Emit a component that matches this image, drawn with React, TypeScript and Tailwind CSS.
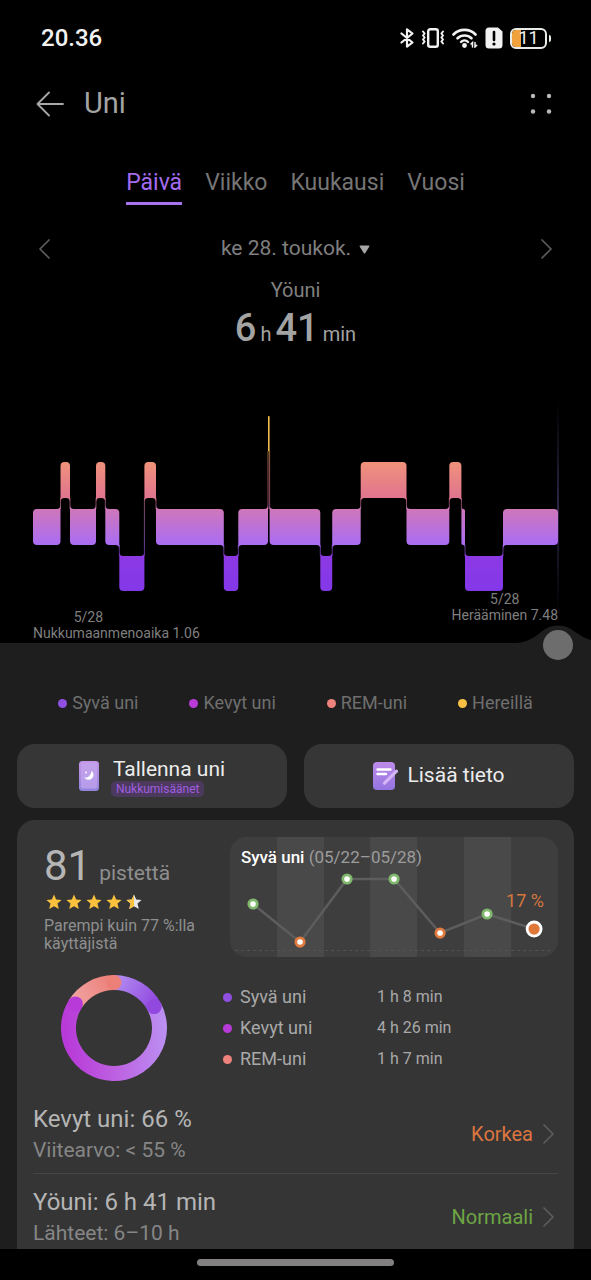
import React, { useState } from 'react';

type Level = 'awake' | 'rem' | 'light' | 'deep';

interface Segment {
  level: Level;
  from: number;
  to: number;
}

const TABS = ['Päivä', 'Viikko', 'Kuukausi', 'Vuosi'];

const LEGEND = [
  { name: 'Syvä uni', dot: 'bg-[#8f4fe0]' },
  { name: 'Kevyt uni', dot: 'bg-[#b83bd8]' },
  { name: 'REM-uni', dot: 'bg-[#ee827c]' },
  { name: 'Hereillä', dot: 'bg-[#f7c244]' },
];

const DURATIONS = ['1 h 8 min', '4 h 26 min', '1 h 7 min'];

const METRICS = [
  { title: 'Kevyt uni: 66 %', reference: 'Viitearvo: < 55 %', status: 'Korkea', color: 'text-[#dd7540]' },
  { title: 'Yöuni: 6 h 41 min', reference: 'Lähteet: 6–10 h', status: 'Normaali', color: 'text-[#6da544]' },
];

// Top and bottom edge of each sleep stage in the chart
const BANDS: Record<Level, [number, number]> = {
  awake: [25, 60],
  rem: [71, 107],
  light: [118, 154],
  deep: [165, 200],
};

const SEGMENTS: Segment[] = [
  { level: 'light', from: 33, to: 60.5 },
  { level: 'rem', from: 60.5, to: 70 },
  { level: 'light', from: 70, to: 96 },
  { level: 'rem', from: 96, to: 105.3 },
  { level: 'light', from: 105.3, to: 119.3 },
  { level: 'deep', from: 119.3, to: 144.4 },
  { level: 'rem', from: 144.4, to: 156 },
  { level: 'light', from: 156, to: 223.8 },
  { level: 'deep', from: 223.8, to: 238.3 },
  { level: 'light', from: 238.3, to: 268 },
  { level: 'awake', from: 268, to: 269.6 },
  { level: 'light', from: 269.6, to: 320.3 },
  { level: 'deep', from: 320.3, to: 332.2 },
  { level: 'light', from: 332.2, to: 360.7 },
  { level: 'rem', from: 360.7, to: 406.5 },
  { level: 'light', from: 406.5, to: 449.3 },
  { level: 'rem', from: 449.3, to: 461.4 },
  { level: 'light', from: 461.4, to: 465 },
  { level: 'deep', from: 465, to: 503 },
  { level: 'light', from: 503, to: 558 },
];

const TREND = [
  { x: 23, y: 67, ok: true },
  { x: 70, y: 105, ok: false },
  { x: 117, y: 42, ok: true },
  { x: 164, y: 42, ok: true },
  { x: 210, y: 96, ok: false },
  { x: 257, y: 77, ok: true },
];

// A corner flares towards a neighbour on that side and is rounded otherwise
function segmentPath(index: number) {
  const { level, from, to } = SEGMENTS[index];
  const [top, bottom] = BANDS[level];
  const r = Math.min(4, (to - from) / 2);
  const prev = SEGMENTS[index - 1];
  const next = SEGMENTS[index + 1];
  const above = (s?: Segment) => (s && BANDS[s.level][0] < top ? -r : r);
  const below = (s?: Segment) => (s && BANDS[s.level][0] > top ? r : -r);
  return [
    `M${from} ${top + above(prev)}`,
    `Q${from} ${top} ${from + r} ${top}`,
    `H${to - r}`,
    `Q${to} ${top} ${to} ${top + above(next)}`,
    `V${bottom + below(next)}`,
    `Q${to} ${bottom} ${to - r} ${bottom}`,
    `H${from + r}`,
    `Q${from} ${bottom} ${from} ${bottom + below(prev)}`,
    'Z',
  ].join(' ');
}

function arc(start: number, end: number) {
  const point = (deg: number) => {
    const a = (deg * Math.PI) / 180;
    return `${53 + 45.5 * Math.sin(a)} ${53 - 45.5 * Math.cos(a)}`;
  };
  return `M${point(start)} A45.5 45.5 0 ${end - start > 180 ? 1 : 0} 1 ${point(end)}`;
}

function StatusBar() {
  return (
    <div className="flex h-[76px] items-center justify-between pl-[41px] pr-10 text-[#f2f2f2]">
      <span className="text-2xl font-medium">20.36</span>
      <div className="flex items-center gap-[7px]">
        <svg className="h-5 w-[14px]" viewBox="0 0 14 20" fill="none" stroke="currentColor" strokeWidth="2.2" strokeLinejoin="round" strokeLinecap="round">
          <path d="M1.5 5.5l11 9L7 18.7V1.3l5.500 4.200-11 9" />
        </svg>
        <svg className="h-5 w-6" viewBox="0 0 24 20" fill="none" stroke="currentColor" strokeLinecap="round" strokeLinejoin="round">
          <rect x="7.200" y="1.200" width="9.600" height="17.600" rx="2" strokeWidth="2.400" />
          <path d="M2 3.500l1.600 2-1.600 2 1.600 2-1.600 2 1.600 2-1.600 2M22 3.500l-1.600 2 1.600 2-1.600 2 1.600 2-1.600 2 1.600 2" strokeWidth="2" />
        </svg>
        <svg className="h-5 w-[26px]" viewBox="0 0 26 20" fill="none" stroke="currentColor" strokeLinecap="round">
          <path d="M1.500 6.500a15.500 15.500 0 0 1 22 0" strokeWidth="2.600" />
          <path d="M5.500 10.300a10 10 0 0 1 14 0" strokeWidth="2.600" />
          <path d="M9 14a5 5 0 0 1 7 0" strokeWidth="2.400" />
          <circle cx="12.500" cy="17.500" r="2.400" fill="currentColor" stroke="none" />
          <path d="M20.500 19v-4.500l-1.500 1.500M23 14.500V19l1.700-1.700" strokeWidth="1.500" />
        </svg>
        <svg className="h-[22px] w-[18px]" viewBox="0 0 18 22">
          <path d="M4 0.500h9L17.500 4.500v13.500a3.500 3.500 0 0 1-3.500 3.500H4a3.500 3.500 0 0 1-3.500-3.500V4A3.500 3.500 0 0 1 4 0.500z" fill="currentColor" />
          <path d="M9 5v8" stroke="#000" strokeWidth="2.600" strokeLinecap="round" />
          <circle cx="9" cy="17" r="1.600" fill="#000" />
        </svg>
        <div className="flex items-center gap-0.5">
          <div className="relative flex h-[21px] w-[37px] items-center justify-center overflow-hidden rounded-md border-2 border-[#e8ece6]">
            <div className="absolute inset-y-0 left-0 w-[9px] bg-[#f2a23c]" />
            <span className="relative text-lg leading-4">11</span>
          </div>
          <div className="h-[7px] w-0.5 rounded-r bg-[#e8ece6]" />
        </div>
      </div>
    </div>
  );
}

function Chevron({ left = false }: { left?: boolean }) {
  return (
    <svg className="h-5 w-[11px]" viewBox="0 0 11 20" fill="none" stroke="#5c5c5c" strokeWidth="1.700" strokeLinecap="round" strokeLinejoin="round">
      <path d={left ? 'M10 1L1 10l9 9' : 'M1 1l9 9-9 9'} />
    </svg>
  );
}

function SleepChart() {
  return (
    <svg className="mt-[33px] block w-full overflow-visible" viewBox="0 0 591 200">
      <defs>
        <linearGradient id="stages" gradientUnits="userSpaceOnUse" x1="0" y1="25" x2="0" y2="200">
          <stop offset="0" stopColor="#f5c04d" />
          <stop offset="0.2" stopColor="#f0b650" />
          <stop offset="0.26" stopColor="#f0927a" />
          <stop offset="0.47" stopColor="#e0748f" />
          <stop offset="0.53" stopColor="#cf77b9" />
          <stop offset="0.74" stopColor="#a96cf5" />
          <stop offset="0.8" stopColor="#8d39e4" />
          <stop offset="1" stopColor="#8338e8" />
        </linearGradient>
        <linearGradient id="cursor" x1="0" y1="0" x2="0" y2="1">
          <stop offset="0" stopColor="#4a3f74" stopOpacity="0" />
          <stop offset="0.5" stopColor="#4a3f74" stopOpacity="0.6" />
          <stop offset="1" stopColor="#4a3f74" stopOpacity="0" />
        </linearGradient>
      </defs>
      <rect x="557" y="10" width="2" height="210" fill="url(#cursor)" />
      {SEGMENTS.slice(1).map((s, i) => {
        const [a, b] = [BANDS[SEGMENTS[i].level], BANDS[s.level]];
        const top = Math.min(a[1], b[1]);
        const bottom = Math.max(a[0], b[0]);
        return (
          <rect key={s.from} x={s.from - 0.5} y={top} width="1" height={bottom - top} fill="url(#stages)" opacity="0.6" />
        );
      })}
      {SEGMENTS.map((s, i) => (
        <path key={s.from} d={segmentPath(i)} fill="url(#stages)" />
      ))}
    </svg>
  );
}

function TrendChart() {
  return (
    <div className="relative overflow-hidden rounded-2xl bg-[#3e3e3e]">
      <svg className="block w-full" viewBox="0 0 328 120">
        {[47, 140, 234].map((x) => (
          <rect key={x} x={x} y="0" width="47" height="120" fill="#494949" />
        ))}
        <path d="M5 113.500H323" stroke="#535353" strokeDasharray="3 3" />
        <polyline points={[...TREND, { x: 304, y: 92 }].map((p) => `${p.x},${p.y}`).join(' ')} fill="none" stroke="#5d5d5d" strokeWidth="2.500" />
        {TREND.map((p) => (
          <circle key={p.x} cx={p.x} cy={p.y} r="4.200" fill="#fff" stroke={p.ok ? '#80b86e' : '#e07a3f'} strokeWidth="2.800" />
        ))}
        <circle cx="304" cy="92" r="7" fill="#e0783a" stroke="#fff" strokeWidth="2.800" />
      </svg>
      <h2 className="absolute left-[11px] top-2 text-[17px] leading-6 text-[#9c9c9c]">
        <span className="font-medium text-white">Syvä uni</span> (05/22–05/28)
      </h2>
      <span className="absolute right-[14px] top-[52px] text-lg leading-6 text-[#d4773f]">17 %</span>
    </div>
  );
}

function Stars() {
  const star = 'M8 0.500l2.200 5 5.400 0.500-4.100 3.600 1.300 5.400L8 12.200 3.200 15l1.300-5.400L0.400 6l5.400-0.500z';
  return (
    <div className="flex gap-1 py-0.5 pl-0.5" role="img" aria-label="4,5 / 5">
      {[0, 1, 2, 3, 4].map((i) => (
        <svg key={i} className="size-4" viewBox="0 0 16 16">
          <path d={star} fill={i === 4 ? '#e6e6e6' : '#f9c13c'} />
          {i === 4 && <path d="M8 0.500V12.200L3.200 15l1.300-5.400L0.400 6l5.400-0.500z" fill="#f9c13c" />}
        </svg>
      ))}
    </div>
  );
}

function Donut() {
  return (
    <svg className="size-[106px] shrink-0" viewBox="0 0 106 106" fill="none" strokeWidth="15">
      <defs>
        <linearGradient id="deepArc" gradientUnits="userSpaceOnUse" x1="53" y1="8" x2="93" y2="32">
          <stop offset="0" stopColor="#b28cf0" />
          <stop offset="1" stopColor="#9048df" />
        </linearGradient>
        <linearGradient id="lightArc" gradientUnits="userSpaceOnUse" x1="104" y1="40" x2="4" y2="48">
          <stop offset="0" stopColor="#bb90f2" />
          <stop offset="0.5" stopColor="#bd64e2" />
          <stop offset="1" stopColor="#b83ad8" />
        </linearGradient>
        <linearGradient id="remArc" gradientUnits="userSpaceOnUse" x1="14" y1="29" x2="53" y2="8">
          <stop offset="0" stopColor="#f0a4a2" />
          <stop offset="1" stopColor="#ed7f79" />
        </linearGradient>
      </defs>
      <path d={arc(0, 62)} stroke="url(#deepArc)" />
      <path d={arc(62, 302)} stroke="url(#lightArc)" />
      <path d={arc(302, 360)} stroke="url(#remArc)" />
      <circle cx="93.200" cy="31.600" r="7.500" fill="#9048df" />
      <circle cx="14.400" cy="28.900" r="7.500" fill="#b83ad8" />
      <circle cx="53" cy="7.500" r="7.500" fill="#ed7f79" />
    </svg>
  );
}

export default function App() {
  const [tab, setTab] = useState('Päivä');

  return (
    <div className="flex h-screen flex-col bg-black font-[Roboto,sans-serif]">
      <StatusBar />
      <main className="min-h-0 flex-1 overflow-y-auto [scrollbar-width:none]">
        {/* Header */}
        <header className="flex h-14 items-center pl-9 pr-[38px]">
          <button aria-label="Takaisin">
            <svg className="h-[26px] w-7" viewBox="0 0 28 26" fill="none" stroke="#a8a8a8" strokeWidth="1.800" strokeLinecap="round" strokeLinejoin="round">
              <path d="M13 1.500L1.500 13 13 24.500M1.500 13H27" />
            </svg>
          </button>
          <h1 className="ml-5 flex-1 text-[29px] text-[#a3a3a3]">Uni</h1>
          <button aria-label="Valikko">
            <svg className="size-6" viewBox="0 0 24 24" fill="#b8b8b8">
              <circle cx="4" cy="4" r="2.200" />
              <circle cx="20" cy="4" r="2.200" />
              <circle cx="4" cy="19.500" r="2.200" />
              <circle cx="20" cy="19.500" r="2.200" />
            </svg>
          </button>
        </header>

        {/* Period tabs */}
        <nav className="flex justify-center gap-[23px] pt-[37px]">
          {TABS.map((name) => (
            <button
              key={name}
              onClick={() => setTab(name)}
              className={`border-b-[3px] pb-[5px] text-[23px] leading-7 ${
                tab === name ? 'border-[#a873ee] text-[#a56cf0]' : 'border-transparent text-[#757575]'
              }`}
            >
              {name}
            </button>
          ))}
        </nav>

        {/* Date picker */}
        <div className="mt-7 flex h-8 items-center justify-between px-[39px]">
          <button aria-label="Edellinen päivä"><Chevron left /></button>
          <button className="flex items-center gap-2 text-[21px] text-[#7f7f7f]">
            ke 28. toukok.
            <svg className="h-[9px] w-[11px]" viewBox="0 0 11 9" fill="#a6a6a6">
              <path d="M1.500 0.500h8q1.500 0 0.700 1.300L6.300 8q-0.800 1-1.600 0L0.800 1.800Q0 0.500 1.500 0.500z" />
            </svg>
          </button>
          <button aria-label="Seuraava päivä"><Chevron /></button>
        </div>

        <p className="mt-[13px] text-center text-xl leading-6 text-[#808080]">Yöuni</p>
        <p className="mt-0.5 flex items-baseline justify-center gap-1 text-xl leading-[48px] text-[#a3a3a3]">
          <span className="text-[38px] font-medium">6</span>
          <span>h</span>
          <span className="text-[38px] font-medium">41</span>
          <span>min</span>
        </p>

        <SleepChart />
        <div className="flex h-[52px] justify-between px-[33px] text-center text-sm leading-4 text-[#7f7f7f]">
          <p className="mt-[18px]">
            <span className="block pr-14">5/28</span>
            Nukkumaanmenoaika 1.06
          </p>
          <p>
            5/28
            <br />
            Herääminen 7.48
          </p>
        </div>

        <section className="relative bg-[#1e1e1e] px-[17px] pt-12">
          {/* Drag handle on top of the chart edge */}
          <svg className="absolute bottom-full right-0 h-[18px] w-[76px]" viewBox="0 0 76 18" fill="#1e1e1e">
            <path d="M0 18C24 17 25 0.500 43 0.500C57 0.500 63 12 76 15V18z" />
          </svg>
          <button aria-label="Siirrä" className="absolute -top-[13px] right-[18px] size-[30px] rounded-full bg-[#6d6d6d]" />

          <ul className="flex justify-center gap-[51px] text-lg leading-6 text-[#6f6f6f]">
            {LEGEND.map((item) => (
              <li key={item.name} className="flex items-center gap-[5px]">
                <span className={`size-[9px] rounded-full ${item.dot}`} />
                {item.name}
              </li>
            ))}
          </ul>

          <div className="mt-[29px] grid grid-cols-2 gap-[17px] text-[21px] text-[#ececec]">
            <button className="flex h-16 items-center justify-center gap-3 rounded-[18px] bg-[#363636]">
              <svg className="h-[30px] w-5" viewBox="0 0 20 30">
                <defs>
                  <linearGradient id="phone" x1="0" y1="0" x2="0" y2="1">
                    <stop offset="0" stopColor="#c797e8" />
                    <stop offset="1" stopColor="#9283dc" />
                  </linearGradient>
                </defs>
                <rect width="20" height="30" rx="3.500" fill="url(#phone)" />
                <rect x="2" y="2" width="16" height="25.500" rx="2" fill="#c3a5ee" opacity="0.7" />
                <path d="M12.500 9.800a5 5 0 1 1-7.300 6.500 4.500 4.500 0 0 0 4.600-0.800c1.500-1.300 2.600-3.200 2.700-5.700z" fill="#fff" />
                <circle cx="7" cy="11.500" r="0.900" fill="#fff" />
              </svg>
              <span className="flex flex-col items-start pt-0.5">
                <span className="pl-0.5 leading-6">Tallenna uni</span>
                <span className="rounded-[5px] bg-[#4c3a5e] px-[5px] text-xs leading-4 text-[#a25de0]">Nukkumisäänet</span>
              </span>
            </button>
            <button className="flex h-16 items-center justify-center gap-2 rounded-[18px] bg-[#363636]">
              <svg className="h-7 w-[26px]" viewBox="0 0 26 28">
                <defs>
                  <linearGradient id="note" x1="0" y1="0" x2="0" y2="1">
                    <stop offset="0" stopColor="#bd8cea" />
                    <stop offset="1" stopColor="#9474e0" />
                  </linearGradient>
                </defs>
                <rect width="22" height="28" rx="4" fill="url(#note)" />
                <path d="M4.500 7.500h13M4.500 12h8.500" stroke="#fff" strokeWidth="2.400" strokeLinecap="round" />
                <path d="M23.500 9.200L11.500 21.200" stroke="#d4b6f6" strokeWidth="3.200" strokeLinecap="round" />
              </svg>
              Lisää tieto
            </button>
          </div>

          {/* Sleep score card */}
          <div className="mt-3 rounded-t-[18px] bg-[#353535] px-4 pt-[17px]">
            <div className="grid grid-cols-[3fr_5fr]">
              <div className="pl-[11px] pt-2.5 text-[#8f8f8f]">
                <p className="flex items-baseline gap-2 text-[21px] leading-[38px]">
                  <span className="text-[42px] text-[#b5b5b5]">81</span>
                  pistettä
                </p>
                <Stars />
                <p className="mt-[5px] text-base leading-[18px]">Parempi kuin 77 %:lla käyttäjistä</p>
              </div>
              <TrendChart />
            </div>

            <div className="mt-[18px] flex items-center gap-14 pl-7">
              <Donut />
              <table className="text-left text-lg text-[#a9a9a9]">
                <tbody>
                  {DURATIONS.map((time, i) => (
                    <tr key={time} className="h-[31px]">
                      <th scope="row" className="w-[154px] p-0 font-normal">
                        <span className="flex items-center gap-2">
                          <span className={`size-[9px] rounded-full ${LEGEND[i].dot}`} />
                          {LEGEND[i].name}
                        </span>
                      </th>
                      <td className="p-0 text-base">{time}</td>
                    </tr>
                  ))}
                </tbody>
              </table>
            </div>

            <div className="mt-2.5 divide-y divide-[#454545]">
              {METRICS.map((m) => (
                <button key={m.title} className="flex w-full items-center gap-2.5 pb-2 pr-1 pt-3 text-left">
                  <span className="flex-1 text-[21px] leading-[30px] text-[#868686]">
                    <span className="block text-2xl leading-8 text-[#b5b5b5]">{m.title}</span>
                    {m.reference}
                  </span>
                  <span className={`text-xl ${m.color}`}>{m.status}</span>
                  <Chevron />
                </button>
              ))}
            </div>
          </div>
        </section>
      </main>

      {/* Gesture bar */}
      <footer className="flex h-[31px] shrink-0 justify-center pt-2.5">
        <div className="h-[7px] w-1/3 rounded-full bg-[#828080]" />
      </footer>
    </div>
  );
}
